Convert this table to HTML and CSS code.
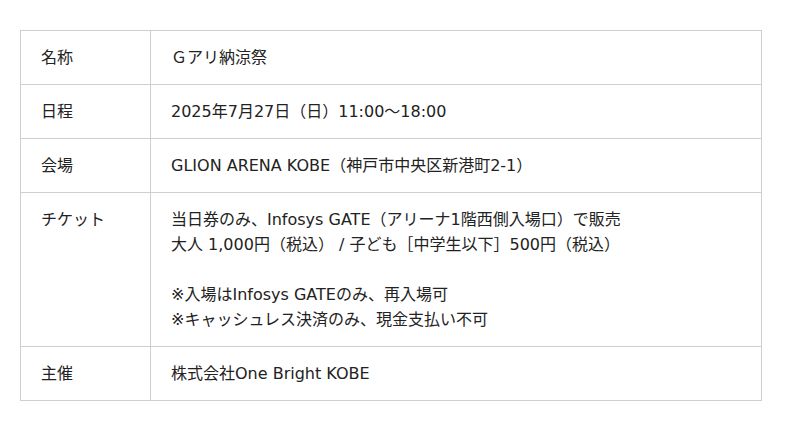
FILE: index.html
```html
<!DOCTYPE html>
<html lang="ja">
<head>
<meta charset="utf-8">
<link rel="stylesheet" href="styles.css">
</head>
<body>
<div class="wrap">
<table class="info">
<tr><th>名称</th><td>Ｇアリ納涼祭</td></tr>
<tr><th>日程</th><td>2025年7月27日（日）11:00〜18:00</td></tr>
<tr><th>会場</th><td>GLION ARENA KOBE（神戸市中央区新港町2-1）</td></tr>
<tr><th>チケット</th><td>当日券のみ、Infosys GATE（アリーナ1階西側入場口）で販売<br>大人 1,000円（税込） / 子ども［中学生以下］500円（税込）<br><br>※入場はInfosys GATEのみ、再入場可<br>※キャッシュレス決済のみ、現金支払い不可</td></tr>
<tr><th>主催</th><td>株式会社One Bright KOBE</td></tr>
</table>
</div>
</body>
</html>
```

FILE: styles.css
```css
html, body {
  margin: 0;
  padding: 0;
  background: #fff;
}
.wrap {
  padding: 30px 0 0 20px;
}
.info {
  width: 742px;
  border-collapse: collapse;
  font-family: "DejaVu Sans", "Noto Sans CJK JP", sans-serif;
  font-size: 16px;
  line-height: 25px;
  color: #222;
}
.info th,
.info td {
  border: 1px solid #cfcfcf;
  padding: 14px 20px;
  text-align: left;
  vertical-align: top;
  font-weight: normal;
}
.info th {
  width: 89px;
}
```
